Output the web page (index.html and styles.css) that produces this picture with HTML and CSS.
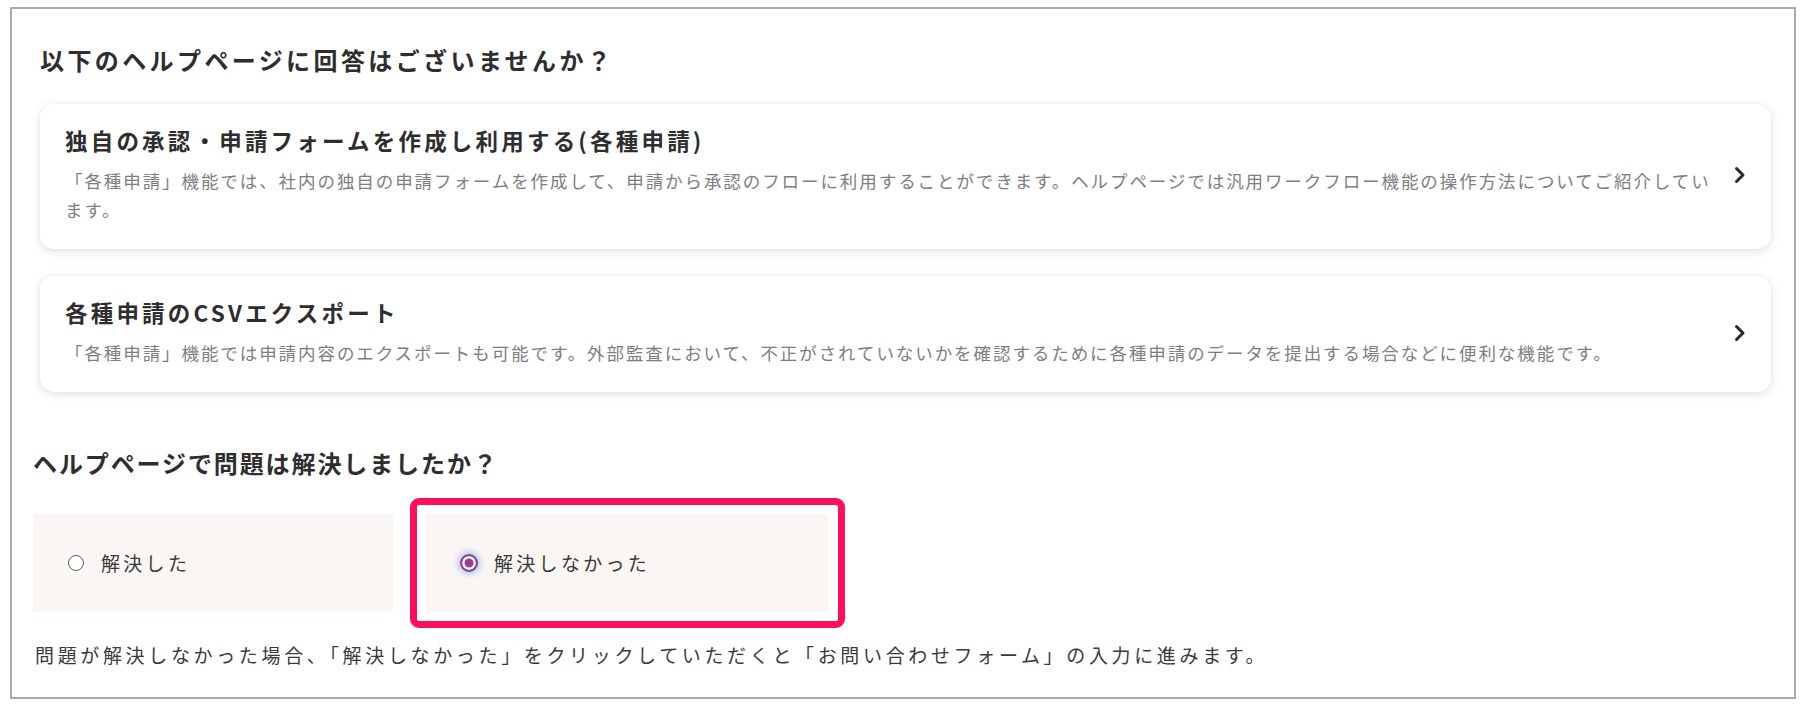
FILE: index.html
```html
<!DOCTYPE html>
<html lang="ja">
<head>
<meta charset="utf-8">
<title>ヘルプページ</title>
<link rel="stylesheet" href="styles.css">
</head>
<body>
<div class="frame">
  <section class="help">
    <h2 class="section-title help-title">以下のヘルプページに回答はございませんか？</h2>
    <div class="cards">
      <a class="card" href="#">
        <div class="card-body">
          <div class="card-title">独自の承認・申請フォームを作成し利用する(各種申請)</div>
          <div class="card-desc">「各種申請」機能では、社内の独自の申請フォームを作成して、申請から承認のフローに利用することができます。ヘルプページでは汎用ワークフロー機能の操作方法についてご紹介しています。</div>
        </div>
        <svg class="chevron" width="14" height="20" viewBox="0 0 14 20"><polyline points="3.5,3.5 10,10 3.5,16.5" fill="none" stroke="#2a2a2a" stroke-width="3" stroke-linecap="round" stroke-linejoin="round"/></svg>
      </a>
      <a class="card" href="#">
        <div class="card-body">
          <div class="card-title">各種申請のCSVエクスポート</div>
          <div class="card-desc">「各種申請」機能では申請内容のエクスポートも可能です。外部監査において、不正がされていないかを確認するために各種申請のデータを提出する場合などに便利な機能です。</div>
        </div>
        <svg class="chevron" width="14" height="20" viewBox="0 0 14 20"><polyline points="3.5,3.5 10,10 3.5,16.5" fill="none" stroke="#2a2a2a" stroke-width="3" stroke-linecap="round" stroke-linejoin="round"/></svg>
      </a>
    </div>
  </section>
  <section class="resolve">
    <h2 class="section-title resolve-title">ヘルプページで問題は解決しましたか？</h2>
    <div class="options">
      <label class="option option-yes">
        <span class="radio"></span>
        <span class="option-text">解決した</span>
      </label>
      <label class="option option-no is-selected">
        <span class="radio radio-checked"></span>
        <span class="option-text">解決しなかった</span>
      </label>
    </div>
    <p class="note">問題が解決しなかった場合、「解決しなかった」をクリックしていただくと「お問い合わせフォーム」の入力に進みます。</p>
  </section>
</div>
</body>
</html>
```

FILE: styles.css
```css
* { box-sizing: border-box; }

html, body {
  margin: 0;
  padding: 0;
  background: #ffffff;
}

body {
  font-family: "Noto Sans CJK JP", "Noto Sans", sans-serif;
  color: #333333;
}

.frame {
  margin: 7px 0 0 10px;
  width: 1786px;
  border: 2px solid #a9a9a9;
  padding: 35px 23px 28px 21px;
  background: #ffffff;
}

.section-title {
  margin: 0;
  font-size: 24px;
  line-height: 32px;
  font-weight: 700;
  letter-spacing: 1.9px;
  color: #2e2e2e;
}

.help-title {
  letter-spacing: 3.4px;
}

.help {
  padding-left: 7px;
}

.cards {
  margin-top: 28px;
  display: flex;
  flex-direction: column;
  gap: 27px;
}

.card {
  display: flex;
  align-items: center;
  background: #ffffff;
  border-radius: 14px;
  box-shadow: 0 2px 10px rgba(0, 0, 0, 0.13), 0 0 2px rgba(0, 0, 0, 0.04);
  padding: 22px 24px 25px 25px;
  text-decoration: none;
  color: inherit;
}

.card-body {
  flex: 1;
  min-width: 0;
  margin-right: 10px;
}

.card-title {
  font-size: 22.5px;
  line-height: 28px;
  font-weight: 700;
  letter-spacing: 3.2px;
  color: #2e2e2e;
  margin-bottom: 12px;
}

.card-desc {
  font-size: 17.5px;
  line-height: 29px;
  letter-spacing: 1.92px;
  color: #7e7e7e;
}

.chevron {
  flex: none;
  display: block;
}

.resolve-title {
  margin-top: 55px;
}

.options {
  margin-top: 35px;
  display: flex;
  gap: 33px;
}

.option {
  position: relative;
  display: flex;
  align-items: center;
  height: 98px;
  background: #f9f6f3;
  padding-left: 35px;
  cursor: pointer;
}

.option-yes { width: 360px; }
.option-no { width: 402px; }

.is-selected::after {
  content: "";
  position: absolute;
  left: -16px;
  top: -16px;
  right: -17px;
  bottom: -16px;
  border: 7px solid #ff0f5a;
  border-radius: 9px;
  pointer-events: none;
}

.radio {
  flex: none;
  width: 16px;
  height: 16px;
  border-radius: 50%;
  border: 1.5px solid #5f5f5f;
  background: #ffffff;
  margin-left: 0;
  margin-right: 17px;
}

.radio-checked {
  width: 18px;
  height: 18px;
  margin-left: -1px;
  margin-right: 16px;
  border: 2px solid #953d97;
  background: #953d97;
  box-shadow: inset 0 0 0 2.5px #ffffff, 0 0 5px 3px rgba(120, 170, 255, 0.45);
}

.option-text {
  font-size: 19px;
  line-height: 28px;
  letter-spacing: 3.3px;
  color: #3a3a3a;
}

.note {
  margin: 29px 0 0 2px;
  font-size: 19px;
  line-height: 28px;
  letter-spacing: 3.65px;
  color: #3a3a3a;
}
```
